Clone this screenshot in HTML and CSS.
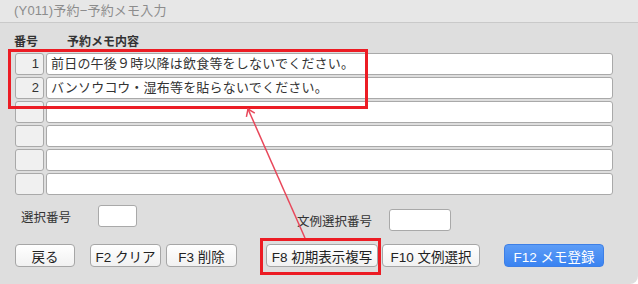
FILE: index.html
```html
<!DOCTYPE html>
<html>
<head>
  <meta charset="utf-8">
  <title>予約メモ入力</title>
  <link rel="stylesheet" href="styles.css">
</head>
<body>
  <div class="window">
    <div class="titlebar">(Y011)予約−予約メモ入力</div>
    <div class="content">
      <div class="memo-head">
        <span class="col-no">番号</span>
        <span class="col-text">予約メモ内容</span>
      </div>
      <div class="memo-list">
        <div class="memo-no">1</div><div class="memo-text">前日の午後９時以降は飲食等をしないでください。</div>
        <div class="memo-no">2</div><div class="memo-text">バンソウコウ・湿布等を貼らないでください。</div>
        <div class="memo-no"></div><div class="memo-text"></div>
        <div class="memo-no"></div><div class="memo-text"></div>
        <div class="memo-no"></div><div class="memo-text"></div>
        <div class="memo-no"></div><div class="memo-text"></div>
      </div>
      <div class="select-row">
        <div class="field field-sel">
          <span class="field-label">選択番号</span>
          <div class="field-box box-sel"></div>
        </div>
        <div class="field field-sample">
          <span class="field-label">文例選択番号</span>
          <div class="field-box box-sample"></div>
        </div>
      </div>
      <div class="button-row">
        <button class="btn btn-back">戻る</button>
        <button class="btn btn-clear">F2 クリア</button>
        <button class="btn btn-delete">F3 削除</button>
        <button class="btn btn-copy">F8 初期表示複写</button>
        <button class="btn btn-sample">F10 文例選択</button>
        <button class="btn btn-save">F12 メモ登録</button>
      </div>
    </div>

    <!-- annotation overlay -->
    <div class="mark mark-rows"></div>
    <div class="mark mark-button"></div>
    <svg class="arrow" width="638" height="284" viewBox="0 0 638 284">
      <line x1="305" y1="238" x2="248" y2="109" stroke="#e8475a" stroke-width="1.5"/>
      <polyline points="246.4,116.8 248,109 254.8,113.1" fill="none" stroke="#e8475a" stroke-width="1.5"/>
    </svg>
  </div>
</body>
</html>
```

FILE: styles.css
```css
body {
  margin: 0;
  background-color: #fff;
  font-family: 'Liberation Sans', 'Noto Sans CJK JP', sans-serif;
  color: #333;
}
.window {
  position: relative;
  width: 638px;
  height: 284px;
  background-color: #dedede;
  border-bottom-right-radius: 8px;
  overflow: hidden;
}
.titlebar {
  height: 22px;
  line-height: 22px;
  padding-left: 14px;
  font-size: 13px;
  letter-spacing: 0.2px;
  color: #8c8c8c;
  background-color: #e7e7e7;
  border-bottom: 1px solid #c9c9c9;
}
.content {
  padding: 12px 25px 0 15px;
}
.memo-head {
  display: flex;
  height: 14px;
  line-height: 14px;
  font-size: 12px;
  font-weight: bold;
  margin-bottom: 4px;
}
.col-no {
  width: 53px;
  margin-left: -1px;
}
.memo-list {
  display: grid;
  grid-template-columns: 29px 1fr;
  grid-auto-rows: 22px;
  gap: 2px;
}
.memo-no, .memo-text {
  border: 1px solid #a9a9a9;
  border-radius: 3px;
  box-sizing: border-box;
  font-size: 13px;
  line-height: 20px;
}
.memo-no {
  background-color: #f0f0f0;
  text-align: right;
  padding-right: 4px;
}
.memo-text {
  background-color: #fff;
  padding-left: 4px;
  letter-spacing: 0.2px;
  color: #333;
}
.select-row {
  display: flex;
  align-items: flex-start;
  margin-top: 10px;
  height: 26px;
}
.field {
  display: flex;
  align-items: center;
  font-size: 12.5px;
}
.field-sel {
  margin-left: 6px;
}
.field-sel .field-label {
  width: 77px;
}
.field-sample {
  margin-left: 160px;
  margin-top: 4px;
}
.field-sample .field-label {
  width: 92px;
}
.field-box {
  height: 22px;
  box-sizing: border-box;
  background-color: #fff;
  border: 1px solid #a9a9a9;
  border-radius: 3px;
}
.box-sel {
  width: 39px;
}
.box-sample {
  width: 62px;
}
.button-row {
  display: flex;
  margin-top: 13px;
}
.btn {
  height: 23px;
  box-sizing: border-box;
  padding: 0;
  font-family: 'Liberation Sans', 'Noto Sans CJK JP', sans-serif;
  font-size: 13.5px;
  color: #222;
  background: linear-gradient(#ffffff, #f1f1f1);
  border: 1px solid #a6a6a6;
  border-radius: 4px;
}
.btn-back { width: 60px; }
.btn-clear { width: 71px; margin-left: 15px; }
.btn-delete { width: 71px; margin-left: 5px; }
.btn-copy { width: 112px; margin-left: 29px; }
.btn-sample { width: 98px; margin-left: 4px; }
.btn-save {
  width: 100px;
  margin-left: 24px;
  color: #fff;
  background: linear-gradient(#5c9cf6, #3a83f1);
  border-color: #3d7fe6;
}
.mark {
  position: absolute;
  border: 3px solid #ec1c24;
  box-sizing: border-box;
}
.mark-rows {
  left: 8px;
  top: 49px;
  width: 360px;
  height: 60px;
}
.mark-button {
  left: 260px;
  top: 238px;
  width: 121px;
  height: 37px;
}
.arrow {
  position: absolute;
  left: 0;
  top: 0;
}
```
